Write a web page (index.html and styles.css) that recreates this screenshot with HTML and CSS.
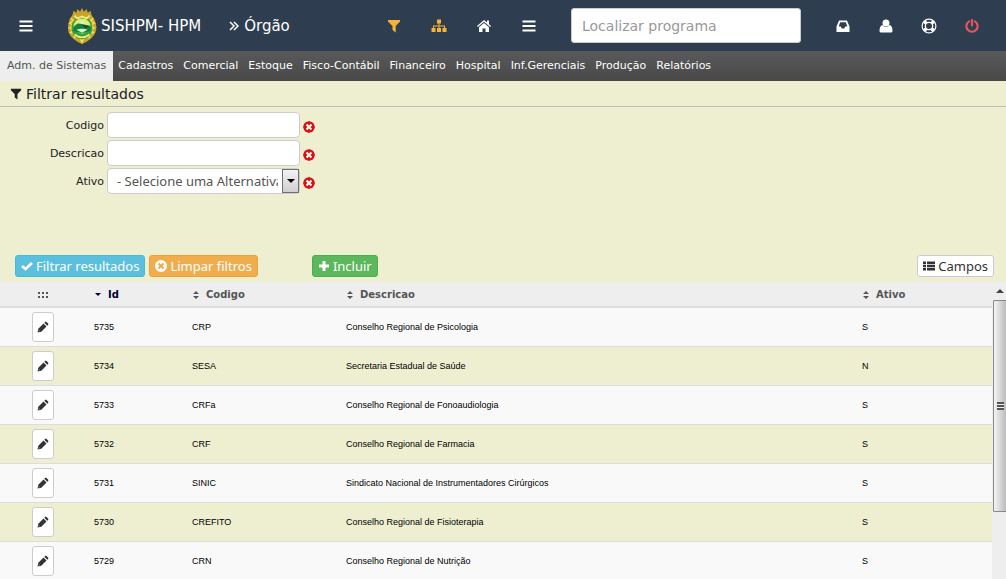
FILE: index.html
```
<!DOCTYPE html>
<html lang="pt-BR">
<head>
    <meta charset="UTF-8">
    <title>SISHPM - Órgão</title>
    <link rel="stylesheet" href="styles.css">
</head>
<body>
    <svg class="sprite" aria-hidden="true">
        <symbol id="bars" viewBox="0 0 14 14"><path d="M.5 1.500h13v2H.5zm0 4.500h13v2H.5zm0 4.500h13v2H.5z"/></symbol>
        <symbol id="filter" viewBox="0 0 14 14"><path d="M1 1h12v1.500L8.700 7v6.500L5.500 11V7L1 2.500z"/></symbol>
        <symbol id="sitemap" viewBox="0 0 16 14"><path d="M6 .5h4v4H8.500v2H14V9h1.500v4h-4V9H13V7.500H8.500V9H10v4H6V9h1.500V7.500H3V9h1.500v4h-4V9H2V6.500h5.500v-2H6z"/></symbol>
        <symbol id="home" viewBox="0 0 14 14"><path d="M7 1l3 2.500V1.500h2v3.800l2 1.700-.8 1L7 2.800.8 8 0 7zM7 4l5 4.200V13H8.500V9.500h-3V13H2V8.200z"/></symbol>
        <symbol id="inbox" viewBox="0 0 14 14"><path fill-rule="evenodd" d="M3 1.500h8l2.500 6V13H.5V7.500zM4.200 3.300L2.700 7.500h2.100l1 2h2.400l1-2h2.100L9.800 3.300z"/></symbol>
        <symbol id="user" viewBox="0 0 14 14"><circle cx="7" cy="4" r="3.500"/><path d="M3.300 6Q7 10 10.700 6 13.500 7 13.500 12q0 1.500-1.500 1.500H2Q.5 13.500.5 12q0-5 2.800-6z"/></symbol>
        <symbol id="ring" viewBox="0 0 16 16"><path fill-rule="evenodd" d="M8 .5a7.500 7.500 0 1 1 0 15 7.500 7.500 0 1 1 0-15zM8 5a3 3 0 1 0 0 6 3 3 0 1 0 0-6zM5 2.300Q8 1 11 2.300L9.800 4Q8 3.400 6.200 4zM5 13.700Q8 15 11 13.700L9.800 12Q8 12.600 6.200 12zM2.300 5Q1 8 2.300 11L4 9.800Q3.400 8 4 6.200zM13.700 5Q15 8 13.700 11L12 9.800Q12.600 8 12 6.200z"/></symbol>
        <symbol id="power" viewBox="0 0 14 14"><path d="M4 2.400a5.600 5.600 0 1 0 6 0M7 1v5.500" fill="none" stroke="currentColor" stroke-width="2.200" stroke-linecap="round"/></symbol>
        <symbol id="remove" viewBox="0 0 12 12"><path fill-rule="evenodd" d="M6 0a6 6 0 1 1 0 12A6 6 0 1 1 6 0zM4.300 2.800L2.800 4.300 4.500 6 2.800 7.700l1.500 1.500L6 7.500l1.700 1.700 1.500-1.500L7.500 6l1.700-1.700-1.500-1.500L6 4.500z"/></symbol>
        <symbol id="check" viewBox="0 0 12 12"><path d="M1 6l3.500 3 6.500-6" fill="none" stroke="currentColor" stroke-width="2.600"/></symbol>
        <symbol id="plus" viewBox="0 0 12 12"><path d="M4.500 1h3v3.500H11v3H7.500V11h-3V7.500H1v-3h3.500z"/></symbol>
        <symbol id="list" viewBox="0 0 12 12"><path d="M0 1.500h3v2.400H0zm4 0h8v2.400H4zM0 4.800h3v2.400H0zm4 0h8v2.400H4zM0 8.100h3v2.400H0zm4 0h8v2.400H4z"/></symbol>
        <symbol id="sort" viewBox="0 0 8 10"><path d="M4 1l3 3H1zM1 6h6L4 9z"/></symbol>
        <symbol id="sort-down" viewBox="0 0 8 10"><path d="M1 3h6L4 6z"/></symbol>
        <symbol id="grip" viewBox="0 0 12 6"><path d="M1 0h2v2H1zm4 0h2v2H5zm4 0h2v2H9zM1 4h2v2H1zm4 0h2v2H5zm4 0h2v2H9z"/></symbol>
        <symbol id="pencil" viewBox="0 0 12 12"><path fill-rule="evenodd" d="M.5 11.500l.8-3.800L6.500 2.500l3 3-5.200 5.200zM7.300 1.700l.8-.8q.7-.6 1.400 0l1.600 1.600q.6.700 0 1.400l-.8.800zM1.900 9.300l-.3 1.100 1.100-.3z"/></symbol>
    </svg>

    <header class="topbar">
        <button class="icon-btn" aria-label="Menu"><svg><use href="#bars"/></svg></button>
        <a class="brand" href="#">
            <svg class="crest" viewBox="0 0 30 38" aria-hidden="true">
                <path d="M5 7l1-4 3 2 1-4 3 3 2-4 2 4 3-3 1 4 3-2 1 4 3 5q4 8 1 14-3 7-14 12Q4 33 1 26-1 20 2 12z" fill="#c9a227"/>
                <path d="M3 11l3 2-4 3 4 2-4 3 4 2-3 3 5 1-1 4 5-1 3 6 3-6 5 1-1-4 5-1-3-3 4-2-4-3 4-2-4-3 3-2" fill="none" stroke="#eee056" stroke-width="1.500"/>
                <ellipse cx="15" cy="21" rx="11" ry="12" fill="#2ea343"/>
                <ellipse cx="15" cy="19" rx="9" ry="8" fill="#e4ec70"/>
                <path d="M6 20q5-6 9-3l9 2v5q-9 5-18 0z" fill="#16813a"/>
                <path d="M11 16l4-3 5 3-4 1zM9 23q6-2 12 0l-6 3z" fill="#d7f2c8"/>
                <path d="M15 18l8 1-4 2z" fill="#243c28"/>
                <path d="M7 8l3 3 5-2 5 2 3-3M7 28q8 6 16 0" fill="none" stroke="#f6e97a" stroke-width="2"/>
            </svg>
            SISHPM- HPM
        </a>
        <h1 class="page-name">
            <svg viewBox="0 0 10 12" aria-hidden="true"><path d="M1 2l4 4-4 4M5 2l4 4-4 4" fill="none" stroke="currentColor" stroke-width="1.500"/></svg>
            Órgão
        </h1>
        <nav class="shortcuts">
            <button class="icon-btn amber" aria-label="Filtro"><svg><use href="#filter"/></svg></button>
            <button class="icon-btn amber" aria-label="Mapa"><svg class="wide"><use href="#sitemap"/></svg></button>
            <button class="icon-btn" aria-label="Início"><svg><use href="#home"/></svg></button>
            <button class="icon-btn" aria-label="Programas"><svg><use href="#bars"/></svg></button>
        </nav>
        <input class="search" type="text" placeholder="Localizar programa" aria-label="Localizar programa">
        <nav class="account">
            <button class="icon-btn" aria-label="Mensagens"><svg><use href="#inbox"/></svg></button>
            <button class="icon-btn" aria-label="Usuário"><svg><use href="#user"/></svg></button>
            <button class="icon-btn" aria-label="Ajuda"><svg class="wide"><use href="#ring"/></svg></button>
            <button class="icon-btn red" aria-label="Sair"><svg><use href="#power"/></svg></button>
        </nav>
    </header>

    <nav class="menu">
        <a class="active" href="#">Adm. de Sistemas</a>
        <a href="#">Cadastros</a>
        <a href="#">Comercial</a>
        <a href="#">Estoque</a>
        <a href="#">Fisco-Contábil</a>
        <a href="#">Financeiro</a>
        <a href="#">Hospital</a>
        <a href="#">Inf.Gerenciais</a>
        <a href="#">Produção</a>
        <a href="#">Relatórios</a>
    </nav>

    <form class="filters">
        <h2><svg aria-hidden="true"><use href="#filter"/></svg>Filtrar resultados</h2>
        <div class="fields">
            <div class="field">
                <label for="codigo">Codigo</label>
                <input id="codigo" type="text">
                <button class="clear" type="button" aria-label="Limpar codigo"><svg><use href="#remove"/></svg></button>
            </div>
            <div class="field">
                <label for="descricao">Descricao</label>
                <input id="descricao" type="text">
                <button class="clear" type="button" aria-label="Limpar descricao"><svg><use href="#remove"/></svg></button>
            </div>
            <div class="field">
                <label for="ativo">Ativo</label>
                <div class="select">
                    <select id="ativo">
                        <option>- Selecione uma Alternativa -</option>
                        <option>S</option>
                        <option>N</option>
                    </select>
                    <span class="arrow"></span>
                </div>
                <button class="clear" type="button" aria-label="Limpar ativo"><svg><use href="#remove"/></svg></button>
            </div>
        </div>
        <div class="actions">
            <button class="btn info" type="submit"><svg><use href="#check"/></svg>Filtrar resultados</button>
            <button class="btn warning" type="reset"><svg><use href="#remove"/></svg>Limpar filtros</button>
            <button class="btn success" type="button"><svg><use href="#plus"/></svg>Incluir</button>
            <button class="btn default" type="button"><svg><use href="#list"/></svg>Campos</button>
        </div>
    </form>

    <main class="results">
        <table>
            <thead>
                <tr>
                    <th class="col-edit"><svg class="grip"><use href="#grip"/></svg></th>
                    <th class="col-id sorted"><svg><use href="#sort-down"/></svg>Id</th>
                    <th class="col-code"><svg><use href="#sort"/></svg>Codigo</th>
                    <th><svg><use href="#sort"/></svg>Descricao</th>
                    <th class="col-active"><svg><use href="#sort"/></svg>Ativo</th>
                </tr>
            </thead>
            <tbody>
                <tr><td><button class="edit" aria-label="Editar"><svg><use href="#pencil"/></svg></button></td><td>5735</td><td>CRP</td><td>Conselho Regional de Psicologia</td><td>S</td></tr>
                <tr><td><button class="edit" aria-label="Editar"><svg><use href="#pencil"/></svg></button></td><td>5734</td><td>SESA</td><td>Secretaria Estadual de Saúde</td><td>N</td></tr>
                <tr><td><button class="edit" aria-label="Editar"><svg><use href="#pencil"/></svg></button></td><td>5733</td><td>CRFa</td><td>Conselho Regional de Fonoaudiologia</td><td>S</td></tr>
                <tr><td><button class="edit" aria-label="Editar"><svg><use href="#pencil"/></svg></button></td><td>5732</td><td>CRF</td><td>Conselho Regional de Farmacia</td><td>S</td></tr>
                <tr><td><button class="edit" aria-label="Editar"><svg><use href="#pencil"/></svg></button></td><td>5731</td><td>SINIC</td><td>Sindicato Nacional de Instrumentadores Cirúrgicos</td><td>S</td></tr>
                <tr><td><button class="edit" aria-label="Editar"><svg><use href="#pencil"/></svg></button></td><td>5730</td><td>CREFITO</td><td>Conselho Regional de Fisioterapia</td><td>S</td></tr>
                <tr><td><button class="edit" aria-label="Editar"><svg><use href="#pencil"/></svg></button></td><td>5729</td><td>CRN</td><td>Conselho Regional de Nutrição</td><td>S</td></tr>
            </tbody>
        </table>
        <div class="scrollbar">
            <div class="scroll-up"></div>
            <div class="thumb"></div>
        </div>
    </main>
</body>
</html>
```
FILE: styles.css
```
* {
    box-sizing: border-box;
}
body {
    display: flex;
    flex-direction: column;
    height: 100vh;
    margin: 0;
    overflow: hidden;
    background: #eeeed1;
    color: #222;
    font-family: "DejaVu Sans", Verdana, sans-serif;
    font-size: 10px;
}
h1, h2 {
    margin: 0;
    font-weight: normal;
}
a {
    color: inherit;
    text-decoration: none;
}
button {
    padding: 0;
    border: 0;
    background: none;
    color: inherit;
    font-family: inherit;
}
svg {
    width: 14px;
    height: 14px;
    fill: currentColor;
    flex: none;
}
svg.wide {
    width: 16px;
    height: 16px;
}
.sprite {
    display: none;
}

/* top bar */
.topbar {
    display: flex;
    align-items: center;
    flex: none;
    height: 51px;
    padding: 0 12px;
    background: #2e3e50;
    color: #fff;
}
.icon-btn {
    display: flex;
    align-items: center;
    justify-content: center;
    width: 28px;
    height: 28px;
}
.amber {
    color: #f8b334;
}
.red {
    color: #e4565c;
}
.brand {
    display: flex;
    align-items: center;
    gap: 4px;
    margin-left: 27px;
    font-size: 15px;
    white-space: nowrap;
}
.crest {
    width: 30px;
    height: 36px;
}
.page-name {
    display: flex;
    align-items: center;
    gap: 5px;
    margin-left: 28px;
    font-size: 15px;
}
.page-name svg {
    width: 10px;
    height: 12px;
}
.shortcuts {
    display: flex;
    gap: 17px;
    margin-left: auto;
}
.search {
    width: 230px;
    height: 35px;
    margin: 0 28px;
    padding: 0 10px;
    border: 1px solid #ccc;
    border-radius: 3px;
    background: #fff;
    font-family: inherit;
    font-size: 14px;
}
.search::placeholder {
    color: #999;
}
.account {
    display: flex;
    gap: 15px;
    margin-right: 8px;
}

/* module menu */
.menu {
    display: flex;
    flex: none;
    height: 30px;
    background: linear-gradient(#5a5a5a, #484848);
    color: #fff;
    font-size: 11px;
    line-height: 30px;
    white-space: nowrap;
}
.menu a {
    padding: 0 5px;
}
.menu .active {
    padding: 0 7px;
    background: #eee;
    color: #555;
}

/* filters */
.filters h2 {
    display: flex;
    align-items: center;
    gap: 4px;
    height: 26px;
    padding: 0 10px;
    border-bottom: 1px solid #bdbdb5;
    font-size: 14px;
}
.filters h2 svg {
    width: 12px;
    height: 12px;
}
.fields {
    display: flex;
    flex-direction: column;
    gap: 2px;
    height: 148px;
    padding: 5px 0;
}
.field {
    display: flex;
    align-items: center;
}
.field label {
    width: 104px;
    margin-right: 3px;
    font-size: 11px;
    text-align: right;
}
.field input, .field select {
    width: 193px;
    height: 26px;
    padding: 0 9px;
    border: 1px solid #ccc;
    border-radius: 4px;
    background: #fff;
    color: #555;
    font-family: "Noto Sans", sans-serif;
    font-size: 13px;
}
.select {
    position: relative;
    display: flex;
}
.field select {
    appearance: none;
    padding-right: 21px;
}
.arrow {
    position: absolute;
    top: 1px;
    right: 1px;
    display: flex;
    align-items: center;
    justify-content: center;
    width: 17px;
    height: 24px;
    border: 1px solid #707070;
    background: linear-gradient(#f3f3f3, #cfcfcf);
    pointer-events: none;
}
.arrow::after {
    content: "";
    border: 4px solid transparent;
    border-top-color: #000;
    border-bottom: 0;
}
.clear {
    display: flex;
    margin-left: 3px;
    padding-top: 3px;
    color: #dc1010;
}
.clear svg {
    width: 12px;
    height: 12px;
    border-radius: 6px;
    background: #fff;
}
.actions {
    display: flex;
    gap: 4px;
    padding: 0 12px 5px 15px;
}
.btn {
    display: flex;
    align-items: center;
    gap: 3px;
    height: 22px;
    padding: 0 5px;
    border: 1px solid;
    border-radius: 3px;
    color: #fff;
    font-family: "Noto Sans", sans-serif;
    font-size: 13px;
    white-space: nowrap;
}
.btn svg {
    width: 12px;
    height: 12px;
}
.info {
    border-color: #46b8da;
    background: #5bc0de;
}
.warning {
    border-color: #eea236;
    background: #f0ad4e;
}
.success {
    margin-left: 50px;
    border-color: #4cae4c;
    background: #5cb85c;
}
.default {
    margin-left: auto;
    border-color: #ccc;
    background: #fff;
    color: #333;
}

/* results */
.results {
    display: flex;
    align-items: flex-start;
    flex: 1;
    min-height: 0;
    overflow: hidden;
}
table {
    flex: 1;
    table-layout: fixed;
    border-collapse: collapse;
    color: #000;
    font-family: "Liberation Sans", Arial, sans-serif;
    font-size: 9px;
}
th, td {
    padding: 0 8px;
    text-align: left;
}
th {
    height: 25px;
    border-bottom: 2px solid #ddd;
    background: #eee;
    color: #555;
    font-family: "DejaVu Sans", Verdana, sans-serif;
    font-size: 10px;
}
th svg {
    width: 8px;
    height: 10px;
    margin-right: 6px;
    vertical-align: middle;
}
th .grip {
    width: 12px;
    height: 6px;
    margin: 0;
}
.sorted {
    color: #000033;
}
.col-edit {
    width: 86px;
}
.col-id {
    width: 98px;
}
.col-code {
    width: 154px;
}
.col-active {
    width: 138px;
}
th:first-child, td:first-child {
    text-align: center;
}
td {
    height: 39px;
    border-bottom: 1px solid #ddd;
}
tbody tr {
    background: #f9f9f9;
}
tbody tr:nth-child(even) {
    background: #eeeed1;
}
.edit {
    display: inline-flex;
    align-items: center;
    justify-content: center;
    width: 22px;
    height: 30px;
    border: 1px solid #ccc;
    border-radius: 3px;
    background: #fff;
    color: #333;
    vertical-align: middle;
}
.edit svg {
    width: 12px;
    height: 12px;
}
.scrollbar {
    align-self: stretch;
    width: 14px;
    padding-left: 1px;
    background: #eee;
}
.scroll-up {
    display: flex;
    align-items: center;
    justify-content: center;
    height: 18px;
}
.scroll-up::after {
    content: "";
    border: 4px solid transparent;
    border-top: 0;
    border-bottom-color: #444;
}
.thumb {
    display: flex;
    align-items: center;
    justify-content: center;
    height: 212px;
    border: 1px solid #888;
    border-right: 0;
    border-radius: 2px 0 0 2px;
    background: linear-gradient(to right, #f4f4f4, #bbb);
}
.thumb::after {
    content: "";
    width: 7px;
    height: 8px;
    background: repeating-linear-gradient(#555 0 2px, #eee 2px 3px);
}
```
